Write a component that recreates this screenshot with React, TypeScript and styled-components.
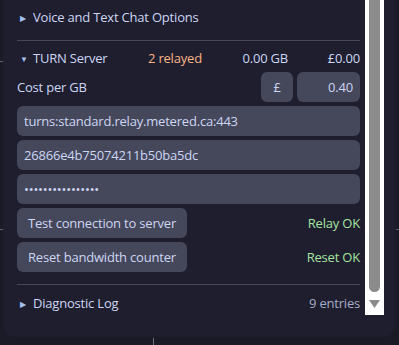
import React from 'react';
import styled, { createGlobalStyle } from 'styled-components';

const FONT = '"Open Sans", "Noto Sans", sans-serif';

const GlobalStyle = createGlobalStyle`
  html, body {
    margin: 0;
    padding: 0;
    background: #1a1b26;
    font-family: ${FONT};
    font-size: 13px;
    letter-spacing: -0.2px;
    color: #cdd6f4;
  }
  * { box-sizing: border-box; }
`;

// faint marks of whatever sits behind the panel
const Stage = styled.div`
  width: 399px;
  height: 345px;
  padding-left: 3px;
  overflow: hidden;
  background:
    linear-gradient(#5b5d6b, #5b5d6b) 0 61px / 3px 1px no-repeat,
    linear-gradient(#5b5d6b, #5b5d6b) 0 229px / 3px 1px no-repeat,
    linear-gradient(#5b5d6b, #5b5d6b) 396px 229px / 3px 1px no-repeat,
    linear-gradient(#6c6e7c, #6c6e7c) 153px 338px / 1px 7px no-repeat,
    #1a1b26;
`;

const Panel = styled.div`
  width: 392px;
  height: 337px;
  background: #1e1e2e;
  border-radius: 0 0 12px 12px;
  display: flex;
  gap: 5px;
  padding: 0 11px 22px 14px;
`;

const Content = styled.div`
  flex: 1;
  display: flex;
  flex-direction: column;
  min-width: 0;
`;

const SectionHeader = styled.div<{ $h: number }>`
  height: ${p => p.$h}px;
  display: flex;
  align-items: center;
  gap: 7px;
  padding-left: 3px;
`;

const Caret = styled.span`
  font-size: 8px;
  color: #a6c1f0;
  width: 6px;
`;

const Divider = styled.div<{ $top: number }>`
  height: 1px;
  background: #45475a;
  margin-top: ${p => p.$top}px;
`;

const TurnHeader = styled.div`
  height: 28px;
  margin-top: 3px;
  display: grid;
  grid-template-columns: 131px minmax(0, 1fr) 88px 72px;
  align-items: center;
`;

const Title = styled.div`
  display: flex;
  align-items: center;
  gap: 7px;
  padding-left: 3px;
`;

const Stat = styled.span<{ $color?: string; $right?: boolean }>`
  color: ${p => p.$color || '#cdd6f4'};
  text-align: ${p => (p.$right ? 'right' : 'left')};
  white-space: nowrap;
`;

const Stack = styled.div`
  display: flex;
  flex-direction: column;
  gap: 4px;
`;

const Row = styled.div`
  display: flex;
  align-items: center;
  gap: 4px;
  height: 30px;
`;

const Label = styled.span`
  flex: 1;
`;

const Field = styled.input<{ $w?: number; $align?: string }>`
  height: 30px;
  width: ${p => (p.$w ? `${p.$w}px` : '100%')};
  border: none;
  border-radius: 6px;
  background: #45475a;
  color: #cdd6f4;
  font-family: ${FONT};
  font-size: 13px;
  letter-spacing: -0.2px;
  padding: 0 7px;
  text-align: ${p => p.$align || 'left'};
  outline: none;
`;

const Button = styled.button<{ $w?: number }>`
  height: 30px;
  width: ${p => (p.$w ? `${p.$w}px` : 'auto')};
  border: none;
  border-radius: 6px;
  background: #45475a;
  color: #cdd6f4;
  font-family: ${FONT};
  font-size: 13px;
  letter-spacing: -0.2px;
  padding: 0 ${p => (p.$w ? 0 : 11)}px;
`;

const ActionRow = styled.div`
  display: flex;
  align-items: center;
  justify-content: space-between;
  height: 30px;
`;

const Ok = styled.span`
  color: #a6e3a1;
`;

const Muted = styled.span`
  color: #a6adc8;
`;

const LogHeader = styled.div`
  height: 22px;
  margin-top: 7px;
  display: flex;
  align-items: center;
  justify-content: space-between;
`;

const Track = styled.div`
  width: 19px;
  height: 315px;
  background: #ffffff;
  display: flex;
  flex-direction: column;
  align-items: center;
  padding-bottom: 6px;
`;

const Thumb = styled.div`
  width: 11px;
  height: 292px;
  background: #8b8b8b;
  border-radius: 0 0 6px 6px;
`;

const Arrow = styled.svg`
  margin-top: 8px;
`;

export default function App() {
  return (
    <Stage>
      <GlobalStyle />
      <Panel>
        <Content>
          <SectionHeader $h={34}>
            <Caret>▶</Caret>
            <span>Voice and Text Chat Options</span>
          </SectionHeader>
          <Divider $top={6} />
          <TurnHeader>
            <Title>
              <Caret>▼</Caret>
              <span>TURN Server</span>
            </Title>
            <Stat $color="#fab387">2 relayed</Stat>
            <Stat $right>0.00 GB</Stat>
            <Stat $right>£0.00</Stat>
          </TurnHeader>
          <Stack>
            <Row>
              <Label>Cost per GB</Label>
              <Button $w={32}>£</Button>
              <Field $w={63} $align="right" defaultValue="0.40" />
            </Row>
            <Field defaultValue="turns:standard.relay.metered.ca:443" />
            <Field defaultValue="26866e4b75074211b50ba5dc" />
            <Field type="password" defaultValue="abcdefghijklmnop" />
            <ActionRow>
              <Button>Test connection to server</Button>
              <Ok>Relay OK</Ok>
            </ActionRow>
            <ActionRow>
              <Button>Reset bandwidth counter</Button>
              <Ok>Reset OK</Ok>
            </ActionRow>
          </Stack>
          <Divider $top={12} />
          <LogHeader>
            <Title>
              <Caret>▶</Caret>
              <span>Diagnostic Log</span>
            </Title>
            <Muted>9 entries</Muted>
          </LogHeader>
        </Content>
        <Track>
          <Thumb />
          <Arrow width="11" height="8" viewBox="0 0 11 8">
            <path d="M0 0 H11 L5.5 8 Z" fill="#8b8b8b" />
          </Arrow>
        </Track>
      </Panel>
    </Stage>
  );
}
